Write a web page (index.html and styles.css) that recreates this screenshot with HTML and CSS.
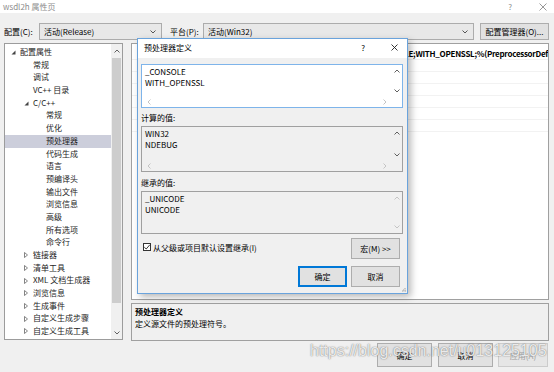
FILE: index.html
```html
<!DOCTYPE html>
<html lang="zh-CN">
<head>
  <meta charset="UTF-8" />
  <title>wsdl2h 属性页</title>
  <link rel="stylesheet" href="styles.css">
</head>
<body>

  <div class="window">
    <div class="titlebar">
      <span class="title">wsdl2h 属性页</span>
      <span class="title-help">?</span>
      <svg class="title-close" width="8" height="8" viewBox="0 0 8 8"><path d="M0.5 0.5 L7.5 7.5 M7.5 0.5 L0.5 7.5" stroke="#8c8c8c" stroke-width="0.9"/></svg>
    </div>

    <div class="toolbar">
      <span class="lbl lbl-config">配置(C):</span>
      <div class="combo combo-config">
        <span>活动(Release)</span>
        <svg width="6" height="4" viewBox="0 0 6 4"><path d="M0.5 0.5 L3 3 L5.5 0.5" fill="none" stroke="#555"/></svg>
      </div>
      <span class="lbl lbl-platform">平台(P):</span>
      <div class="combo combo-platform">
        <span>活动(Win32)</span>
        <svg width="6" height="4" viewBox="0 0 6 4"><path d="M0.5 0.5 L3 3 L5.5 0.5" fill="none" stroke="#555"/></svg>
      </div>
      <button class="btn btn-manager">配置管理器(O)...</button>
    </div>

    <div class="main">
      <div class="tree">
        <ul class="tree-list">
          <li class="lv0"><span class="tw"><svg width="5" height="5" viewBox="0 0 5 5"><path d="M4.5 0.5 L4.5 4.5 L0.5 4.5 Z" fill="#444"/></svg></span>配置属性</li>
          <li class="lv1"><span class="tw"></span>常规</li>
          <li class="lv1"><span class="tw"></span>调试</li>
          <li class="lv1"><span class="tw"></span>VC++ 目录</li>
          <li class="lv1"><span class="tw"><svg width="5" height="5" viewBox="0 0 5 5"><path d="M4.5 0.5 L4.5 4.5 L0.5 4.5 Z" fill="#444"/></svg></span>C/C++</li>
          <li class="lv2"><span class="tw"></span>常规</li>
          <li class="lv2"><span class="tw"></span>优化</li>
          <li class="lv2 selected"><span class="tw"></span>预处理器</li>
          <li class="lv2"><span class="tw"></span>代码生成</li>
          <li class="lv2"><span class="tw"></span>语言</li>
          <li class="lv2"><span class="tw"></span>预编译头</li>
          <li class="lv2"><span class="tw"></span>输出文件</li>
          <li class="lv2"><span class="tw"></span>浏览信息</li>
          <li class="lv2"><span class="tw"></span>高级</li>
          <li class="lv2"><span class="tw"></span>所有选项</li>
          <li class="lv2"><span class="tw"></span>命令行</li>
          <li class="lv1"><span class="tw"><svg width="4" height="6" viewBox="0 0 4 6"><path d="M0.5 0.5 L3.5 3 L0.5 5.5 Z" fill="none" stroke="#666" stroke-width="0.8"/></svg></span>链接器</li>
          <li class="lv1"><span class="tw"><svg width="4" height="6" viewBox="0 0 4 6"><path d="M0.5 0.5 L3.5 3 L0.5 5.5 Z" fill="none" stroke="#666" stroke-width="0.8"/></svg></span>清单工具</li>
          <li class="lv1"><span class="tw"><svg width="4" height="6" viewBox="0 0 4 6"><path d="M0.5 0.5 L3.5 3 L0.5 5.5 Z" fill="none" stroke="#666" stroke-width="0.8"/></svg></span>XML 文档生成器</li>
          <li class="lv1"><span class="tw"><svg width="4" height="6" viewBox="0 0 4 6"><path d="M0.5 0.5 L3.5 3 L0.5 5.5 Z" fill="none" stroke="#666" stroke-width="0.8"/></svg></span>浏览信息</li>
          <li class="lv1"><span class="tw"><svg width="4" height="6" viewBox="0 0 4 6"><path d="M0.5 0.5 L3.5 3 L0.5 5.5 Z" fill="none" stroke="#666" stroke-width="0.8"/></svg></span>生成事件</li>
          <li class="lv1"><span class="tw"><svg width="4" height="6" viewBox="0 0 4 6"><path d="M0.5 0.5 L3.5 3 L0.5 5.5 Z" fill="none" stroke="#666" stroke-width="0.8"/></svg></span>自定义生成步骤</li>
          <li class="lv1"><span class="tw"><svg width="4" height="6" viewBox="0 0 4 6"><path d="M0.5 0.5 L3.5 3 L0.5 5.5 Z" fill="none" stroke="#666" stroke-width="0.8"/></svg></span>自定义生成工具</li>
        </ul>
        <div class="vscroll">
          <div class="arrow"><svg width="6" height="4" viewBox="0 0 6 4"><path d="M0.5 3.5 L3 1 L5.5 3.5" fill="none" stroke="#606060"/></svg></div>
          <div class="thumb"></div>
          <div class="arrow"><svg width="6" height="4" viewBox="0 0 6 4"><path d="M0.5 0.5 L3 3 L5.5 0.5" fill="none" stroke="#606060"/></svg></div>
        </div>
      </div>

      <div class="right">
        <div class="grid">
          <div class="grow"><span class="gname">预处理器定义</span><span class="gval">_CONSOLE;WITH_OPENSSL;%(PreprocessorDefinitions)</span></div>
          <div class="grow"><span class="gname">取消预处理器定义</span><span class="gval"></span></div>
          <div class="grow"><span class="gname">取消定义所有预处理器定义</span><span class="gval"></span></div>
          <div class="grow"><span class="gname">忽略标准包含路径</span><span class="gval"></span></div>
          <div class="grow"><span class="gname">预处理到文件</span><span class="gval"></span></div>
          <div class="grow"><span class="gname">预处理取消显示行号</span><span class="gval"></span></div>
          <div class="grow"><span class="gname">保留注释</span><span class="gval"></span></div>
        </div>
        <div class="desc">
          <div class="desc-title">预处理器定义</div>
          <div>定义源文件的预处理符号。</div>
        </div>
      </div>
    </div>

    <div class="footer">
      <button class="btn btn-ok">确定</button>
      <button class="btn btn-cancel">取消</button>
      <button class="btn btn-apply" disabled>应用(A)</button>
    </div>
  </div>

  <div class="dialog">
    <div class="dlg-title">
      <span>预处理器定义</span>
      <span class="dlg-help">?</span>
      <svg class="dlg-close" width="7" height="7" viewBox="0 0 7 7"><path d="M0.5 0.5 L6.5 6.5 M6.5 0.5 L0.5 6.5" stroke="#222" stroke-width="0.9"/></svg>
    </div>
    <div class="dlg-body">
      <div class="box box-edit">
        <div class="box-text">_CONSOLE<br>WITH_OPENSSL</div>
        <div class="vbar">
          <svg width="6" height="4" viewBox="0 0 6 4"><path d="M0.5 3.5 L3 1 L5.5 3.5" fill="none" stroke="#606060"/></svg>
          <svg width="6" height="4" viewBox="0 0 6 4"><path d="M0.5 0.5 L3 3 L5.5 0.5" fill="none" stroke="#606060"/></svg>
        </div>
        <div class="hbar">
          <svg width="4" height="6" viewBox="0 0 4 6"><path d="M3.5 0.5 L1 3 L3.5 5.5" fill="none" stroke="#c4c4c4"/></svg>
          <svg width="4" height="6" viewBox="0 0 4 6"><path d="M0.5 0.5 L3 3 L0.5 5.5" fill="none" stroke="#c4c4c4"/></svg>
        </div>
        <div class="corner"></div>
      </div>

      <div class="dlg-label">计算的值:</div>
      <div class="box box-ro">
        <div class="box-text">WIN32<br>NDEBUG</div>
        <div class="vbar">
          <svg width="6" height="4" viewBox="0 0 6 4"><path d="M0.5 3.5 L3 1 L5.5 3.5" fill="none" stroke="#606060"/></svg>
          <svg width="6" height="4" viewBox="0 0 6 4"><path d="M0.5 0.5 L3 3 L5.5 0.5" fill="none" stroke="#606060"/></svg>
        </div>
        <div class="hbar">
          <svg width="4" height="6" viewBox="0 0 4 6"><path d="M3.5 0.5 L1 3 L3.5 5.5" fill="none" stroke="#c4c4c4"/></svg>
          <svg width="4" height="6" viewBox="0 0 4 6"><path d="M0.5 0.5 L3 3 L0.5 5.5" fill="none" stroke="#c4c4c4"/></svg>
        </div>
        <div class="corner"></div>
      </div>

      <div class="dlg-label label-inherit">继承的值:</div>
      <div class="box box-ro box-novbar">
        <div class="box-text">_UNICODE<br>UNICODE</div>
        <div class="vbar">
          <svg width="6" height="4" viewBox="0 0 6 4"><path d="M0.5 3.5 L3 1 L5.5 3.5" fill="none" stroke="#c4c4c4"/></svg>
          <svg width="6" height="4" viewBox="0 0 6 4"><path d="M0.5 0.5 L3 3 L5.5 0.5" fill="none" stroke="#c4c4c4"/></svg>
        </div>
      </div>

      <div class="dlg-row">
        <label class="check">
          <span class="checkbox"><svg width="8" height="8" viewBox="0 0 8 8"><path d="M1.3 4.2 L3.2 6 L6.8 1.8" fill="none" stroke="#222" stroke-width="0.9"/></svg></span>
          从父级或项目默认设置继承(I)
        </label>
        <button class="btn dlg-btn">宏(M) &gt;&gt;</button>
      </div>

      <div class="dlg-buttons">
        <button class="btn dlg-btn dlg-ok">确定</button>
        <button class="btn dlg-btn">取消</button>
      </div>
    </div>
    <svg class="grip" width="5" height="5" viewBox="0 0 5 5"><path d="M4 1 L4 2 M2.5 2.5 L2.5 3.5 M4 2.5 L4 3.5 M1 4 L2 4 M2.5 4 L3.5 4 M4 4 L5 4" stroke="#9a9a9a" stroke-width="0.9"/></svg>
  </div>

  <div class="watermark">https://blog.csdn.net/u013125105</div>

</body>
</html>
```

FILE: styles.css
```css
* {
  box-sizing: border-box;
}

body {
  margin: 0;
  width: 554px;
  height: 372px;
  overflow: hidden;
  position: relative;
  background: #f0f0f0;
  font-family: "Noto Sans CJK SC", "Noto Sans", sans-serif;
  font-size: 8px;
  color: #000;
}

/* main property window */
.titlebar {
  height: 13px;
  background: #fff;
  display: flex;
  align-items: center;
  padding-left: 3px;
  color: #8c8c8c;
  line-height: 11px;
}

.title-help {
  margin-left: auto;
  font-size: 8px;
}

.title-close {
  margin-left: 27px;
  margin-right: 7px;
}

.toolbar {
  display: flex;
  align-items: center;
  height: 17px;
  margin-top: 10px;
  padding-left: 4px;
}

.lbl {
  white-space: nowrap;
}

.lbl-config {
  width: 35px;
}

.lbl-platform {
  width: 33px;
  margin-left: 8px;
}

.combo {
  height: 17px;
  display: flex;
  align-items: center;
  justify-content: space-between;
  padding: 0 5px 0 4px;
  background: #e8e8e8;
  border: 1px solid #acacac;
}

.combo-config {
  width: 123px;
}

.combo-platform {
  width: 271px;
}

.btn {
  font-family: inherit;
  font-size: 8px;
  color: #000;
  background: #e1e1e1;
  border: 1px solid #adadad;
  padding: 0;
  margin: 0;
}

.btn-manager {
  width: 69px;
  height: 17px;
  margin-left: 6px;
}

.main {
  display: flex;
  margin-top: 3px;
  height: 298px;
}

.tree {
  margin-left: 4px;
  width: 119px;
  height: 297px;
  border: 1px solid #9c9c9c;
  background: #fff;
  display: flex;
}

.tree-list {
  list-style: none;
  margin: 0;
  padding: 2px 0 0 0;
  flex: 1;
  overflow: hidden;
}

.tree-list li {
  display: flex;
  align-items: center;
  height: 12.7px;
  line-height: 12.7px;
  white-space: nowrap;
  color: #1e1e1e;
}

.tw {
  width: 9px;
  display: flex;
  align-items: center;
}

.lv0 { padding-left: 6px; }
.lv1 { padding-left: 19px; }
.lv2 { padding-left: 32px; }

.tree-list li.selected {
  background: #cccedb;
}

.vscroll {
  width: 11px;
  background: #f0f0f0;
  display: flex;
  flex-direction: column;
}

.vscroll .arrow {
  height: 14px;
  display: flex;
  align-items: center;
  justify-content: center;
}

.vscroll .thumb {
  height: 245px;
  margin: 0 1px;
  background: #cdcdcd;
}

.vscroll .arrow:last-child {
  margin-top: auto;
  height: 13px;
}

.right {
  margin-left: 8px;
  width: 418px;
  display: flex;
  flex-direction: column;
}

.grid {
  height: 257px;
  background: #fff;
  border: 1px solid #a0a0a0;
  padding-top: 4px;
  overflow: hidden;
}

.grow {
  display: flex;
  height: 12px;
  line-height: 12px;
  border-bottom: 1px solid #f2f2f2;
  white-space: nowrap;
}

.gname {
  width: 241px;
  padding-left: 12px;
}

.gval {
  flex: 1;
  overflow: hidden;
}

.grow:first-child .gval {
  font-weight: bold;
  letter-spacing: -0.28px;
}

.desc {
  margin-top: 3px;
  height: 38px;
  border: 1px solid #a0a0a0;
  padding: 2px 3px;
  line-height: 12px;
}

.desc-title {
  font-weight: bold;
}

.footer {
  display: flex;
  justify-content: flex-end;
  margin-top: 2px;
  padding-right: 6px;
}

.footer .btn {
  height: 24px;
}

.btn-ok,
.btn-cancel {
  width: 55px;
}

.btn-cancel {
  margin-left: 6px;
}

.btn-apply {
  width: 50px;
  margin-left: 5px;
  color: #a0a0a0;
  background: #e6e6e6;
  border-color: #cccccc;
}

/* preprocessor definitions dialog */
.dialog {
  position: absolute;
  left: 137px;
  top: 38px;
  width: 271px;
  height: 256px;
  background: #f0f0f0;
  border: 1px solid #6aa3dc;
  box-shadow: 3px 3px 7px rgba(0,0,0,0.28);
}

.dlg-title {
  height: 19px;
  background: #fff;
  display: flex;
  align-items: center;
  padding: 0 9px 2px 6px;
}

.dlg-help {
  margin-left: auto;
}

.dlg-close {
  margin-left: 26px;
}

.dlg-body {
  padding: 6px 4px 0 3px;
}

.box {
  display: grid;
  grid-template-columns: 1fr 11px;
  grid-template-rows: 1fr 10px;
  border: 1px solid #a0a0a0;
}

.box-edit {
  height: 44px;
  background: #fff;
  border-color: #7eb4ea;
}

.box-ro {
  height: 46px;
  background: #f0f0f0;
}

.box-novbar {
  height: 43px;
  grid-template-rows: 1fr;
}

.box-text {
  padding: 2px 3px;
  line-height: 10.5px;
}

.vbar {
  display: flex;
  flex-direction: column;
  justify-content: space-between;
  align-items: center;
  padding: 4px 0 4px;
  background: #f0f0f0;
}

.box-edit .vbar,
.box-edit .hbar,
.box-edit .corner {
  background: #fff;
}

.hbar {
  display: flex;
  justify-content: space-between;
  align-items: center;
  padding: 0 4px 0 5px;
}

.dlg-label {
  margin-top: 5px;
  margin-bottom: 3px;
  line-height: 10px;
}

.label-inherit {
  margin-top: 6px;
}

.dlg-row {
  display: flex;
  align-items: center;
  justify-content: space-between;
  margin-top: 4px;
  padding-left: 2px;
}

.check {
  display: flex;
  align-items: center;
  gap: 2px;
  margin-top: -3px;
}

.checkbox {
  width: 8px;
  height: 8px;
  border: 1px solid #333;
  background: #fff;
  display: flex;
}

.checkbox svg {
  margin: -1px;
}

.dlg-btn {
  width: 49px;
  height: 21px;
  margin-right: 3px;
}

.dlg-buttons {
  display: flex;
  justify-content: flex-end;
  gap: 4px;
  margin-top: 7px;
}

.dlg-buttons .dlg-btn:last-child {
  margin-right: 3px;
}

.dlg-buttons .dlg-ok {
  margin-right: 0;
  border-color: #0078d7;
  box-shadow: inset 0 0 0 1px #0078d7;
}

.grip {
  position: absolute;
  right: 1px;
  bottom: 1px;
}

.watermark {
  position: absolute;
  left: 310px;
  top: 342px;
  font-family: "Liberation Sans", Arial, sans-serif;
  font-size: 16px;
  color: rgba(255,255,255,0.85);
  text-shadow: 0 0 1px rgba(90,90,90,0.85), 0 0 2px rgba(120,120,120,0.4);
  white-space: nowrap;
}
```
